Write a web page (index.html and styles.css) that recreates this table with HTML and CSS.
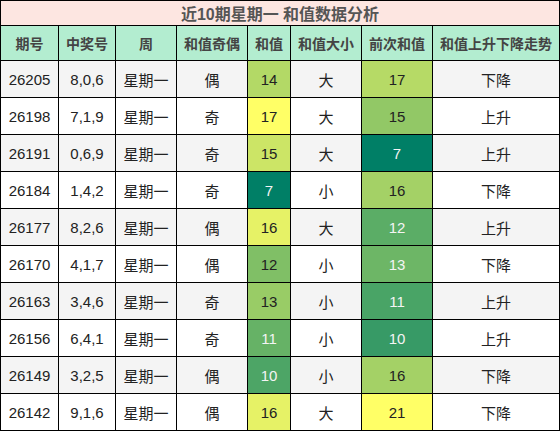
FILE: index.html
```html
<!DOCTYPE html>
<html lang="zh-CN">
<head>
  <meta charset="UTF-8" />
  <title>近10期星期一 和值数据分析</title>
  <link rel="stylesheet" href="styles.css">
</head>
<body>

  <!-- 和值分析表 -->
  <table class="sum-table">
    <colgroup>
      <col class="c-issue">
      <col class="c-nums">
      <col class="c-week">
      <col class="c-odd">
      <col class="c-sum">
      <col class="c-size">
      <col class="c-prev">
      <col class="c-trend">
    </colgroup>
    <thead>
      <tr class="title-row">
        <th colspan="8">近10期星期一 和值数据分析</th>
      </tr>
      <tr class="head-row">
        <th>期号</th>
        <th>中奖号</th>
        <th>周</th>
        <th>和值奇偶</th>
        <th>和值</th>
        <th>和值大小</th>
        <th>前次和值</th>
        <th>和值上升下降走势</th>
      </tr>
    </thead>
    <tbody>
      <tr>
        <td>26205</td><td>8,0,6</td><td>星期一</td><td>偶</td>
        <td style="background:#b3d966">14</td><td>大</td>
        <td style="background:#b6da66">17</td><td>下降</td>
      </tr>
      <tr>
        <td>26198</td><td>7,1,9</td><td>星期一</td><td>奇</td>
        <td style="background:#ffff66">17</td><td>大</td>
        <td style="background:#92c866">15</td><td>上升</td>
      </tr>
      <tr>
        <td>26191</td><td>0,6,9</td><td>星期一</td><td>奇</td>
        <td style="background:#cce566">15</td><td>大</td>
        <td class="light" style="background:#007f66">7</td><td>上升</td>
      </tr>
      <tr>
        <td>26184</td><td>1,4,2</td><td>星期一</td><td>奇</td>
        <td class="light" style="background:#007f66">7</td><td>小</td>
        <td style="background:#a4d166">16</td><td>下降</td>
      </tr>
      <tr>
        <td>26177</td><td>8,2,6</td><td>星期一</td><td>偶</td>
        <td style="background:#e6f266">16</td><td>大</td>
        <td class="light" style="background:#5bad66">12</td><td>上升</td>
      </tr>
      <tr>
        <td>26170</td><td>4,1,7</td><td>星期一</td><td>偶</td>
        <td style="background:#80bf66">12</td><td>小</td>
        <td class="light" style="background:#6db666">13</td><td>下降</td>
      </tr>
      <tr>
        <td>26163</td><td>3,4,6</td><td>星期一</td><td>奇</td>
        <td style="background:#99cc66">13</td><td>小</td>
        <td class="light" style="background:#49a466">11</td><td>上升</td>
      </tr>
      <tr>
        <td>26156</td><td>6,4,1</td><td>星期一</td><td>奇</td>
        <td class="light" style="background:#66b266">11</td><td>小</td>
        <td class="light" style="background:#379a66">10</td><td>上升</td>
      </tr>
      <tr>
        <td>26149</td><td>3,2,5</td><td>星期一</td><td>偶</td>
        <td class="light" style="background:#4da566">10</td><td>小</td>
        <td style="background:#a4d166">16</td><td>下降</td>
      </tr>
      <tr>
        <td>26142</td><td>9,1,6</td><td>星期一</td><td>偶</td>
        <td style="background:#e6f266">16</td><td>大</td>
        <td style="background:#ffff66">21</td><td>下降</td>
      </tr>
    </tbody>
  </table>

</body>
</html>
```

FILE: styles.css
```css
/* Global */
body {
  margin: 0;
  padding: 0;
  background-color: #ffffff;
  font-family: 'Liberation Sans', Arial, 'Noto Sans CJK SC', sans-serif;
}

/* Table */
.sum-table {
  width: 559px;
  border-collapse: collapse;
  table-layout: fixed;
  color: #222;
  font-size: 15px;
  text-align: center;
}

.sum-table td,
.sum-table th {
  border: 1px solid #000;
  padding: 0;
  height: 36px;
}

.c-issue { width: 58px; }
.c-nums  { width: 57px; }
.c-week  { width: 61px; }
.c-odd   { width: 71px; }
.c-sum   { width: 43px; }
.c-size  { width: 71px; }
.c-prev  { width: 71px; }
.c-trend { width: 127px; }

.title-row th {
  height: 24px;
  background-color: #fde6e1;
  color: #555;
  font-size: 16px;
  font-weight: bold;
}

.head-row th {
  height: 34px;
  background-color: #b3edd0;
  color: #444;
  font-size: 14px;
  font-weight: bold;
}

.sum-table tbody tr:nth-child(odd) td {
  background-color: #f4f4f4;
}

.sum-table td.light {
  color: #f4f4f4;
}
```
